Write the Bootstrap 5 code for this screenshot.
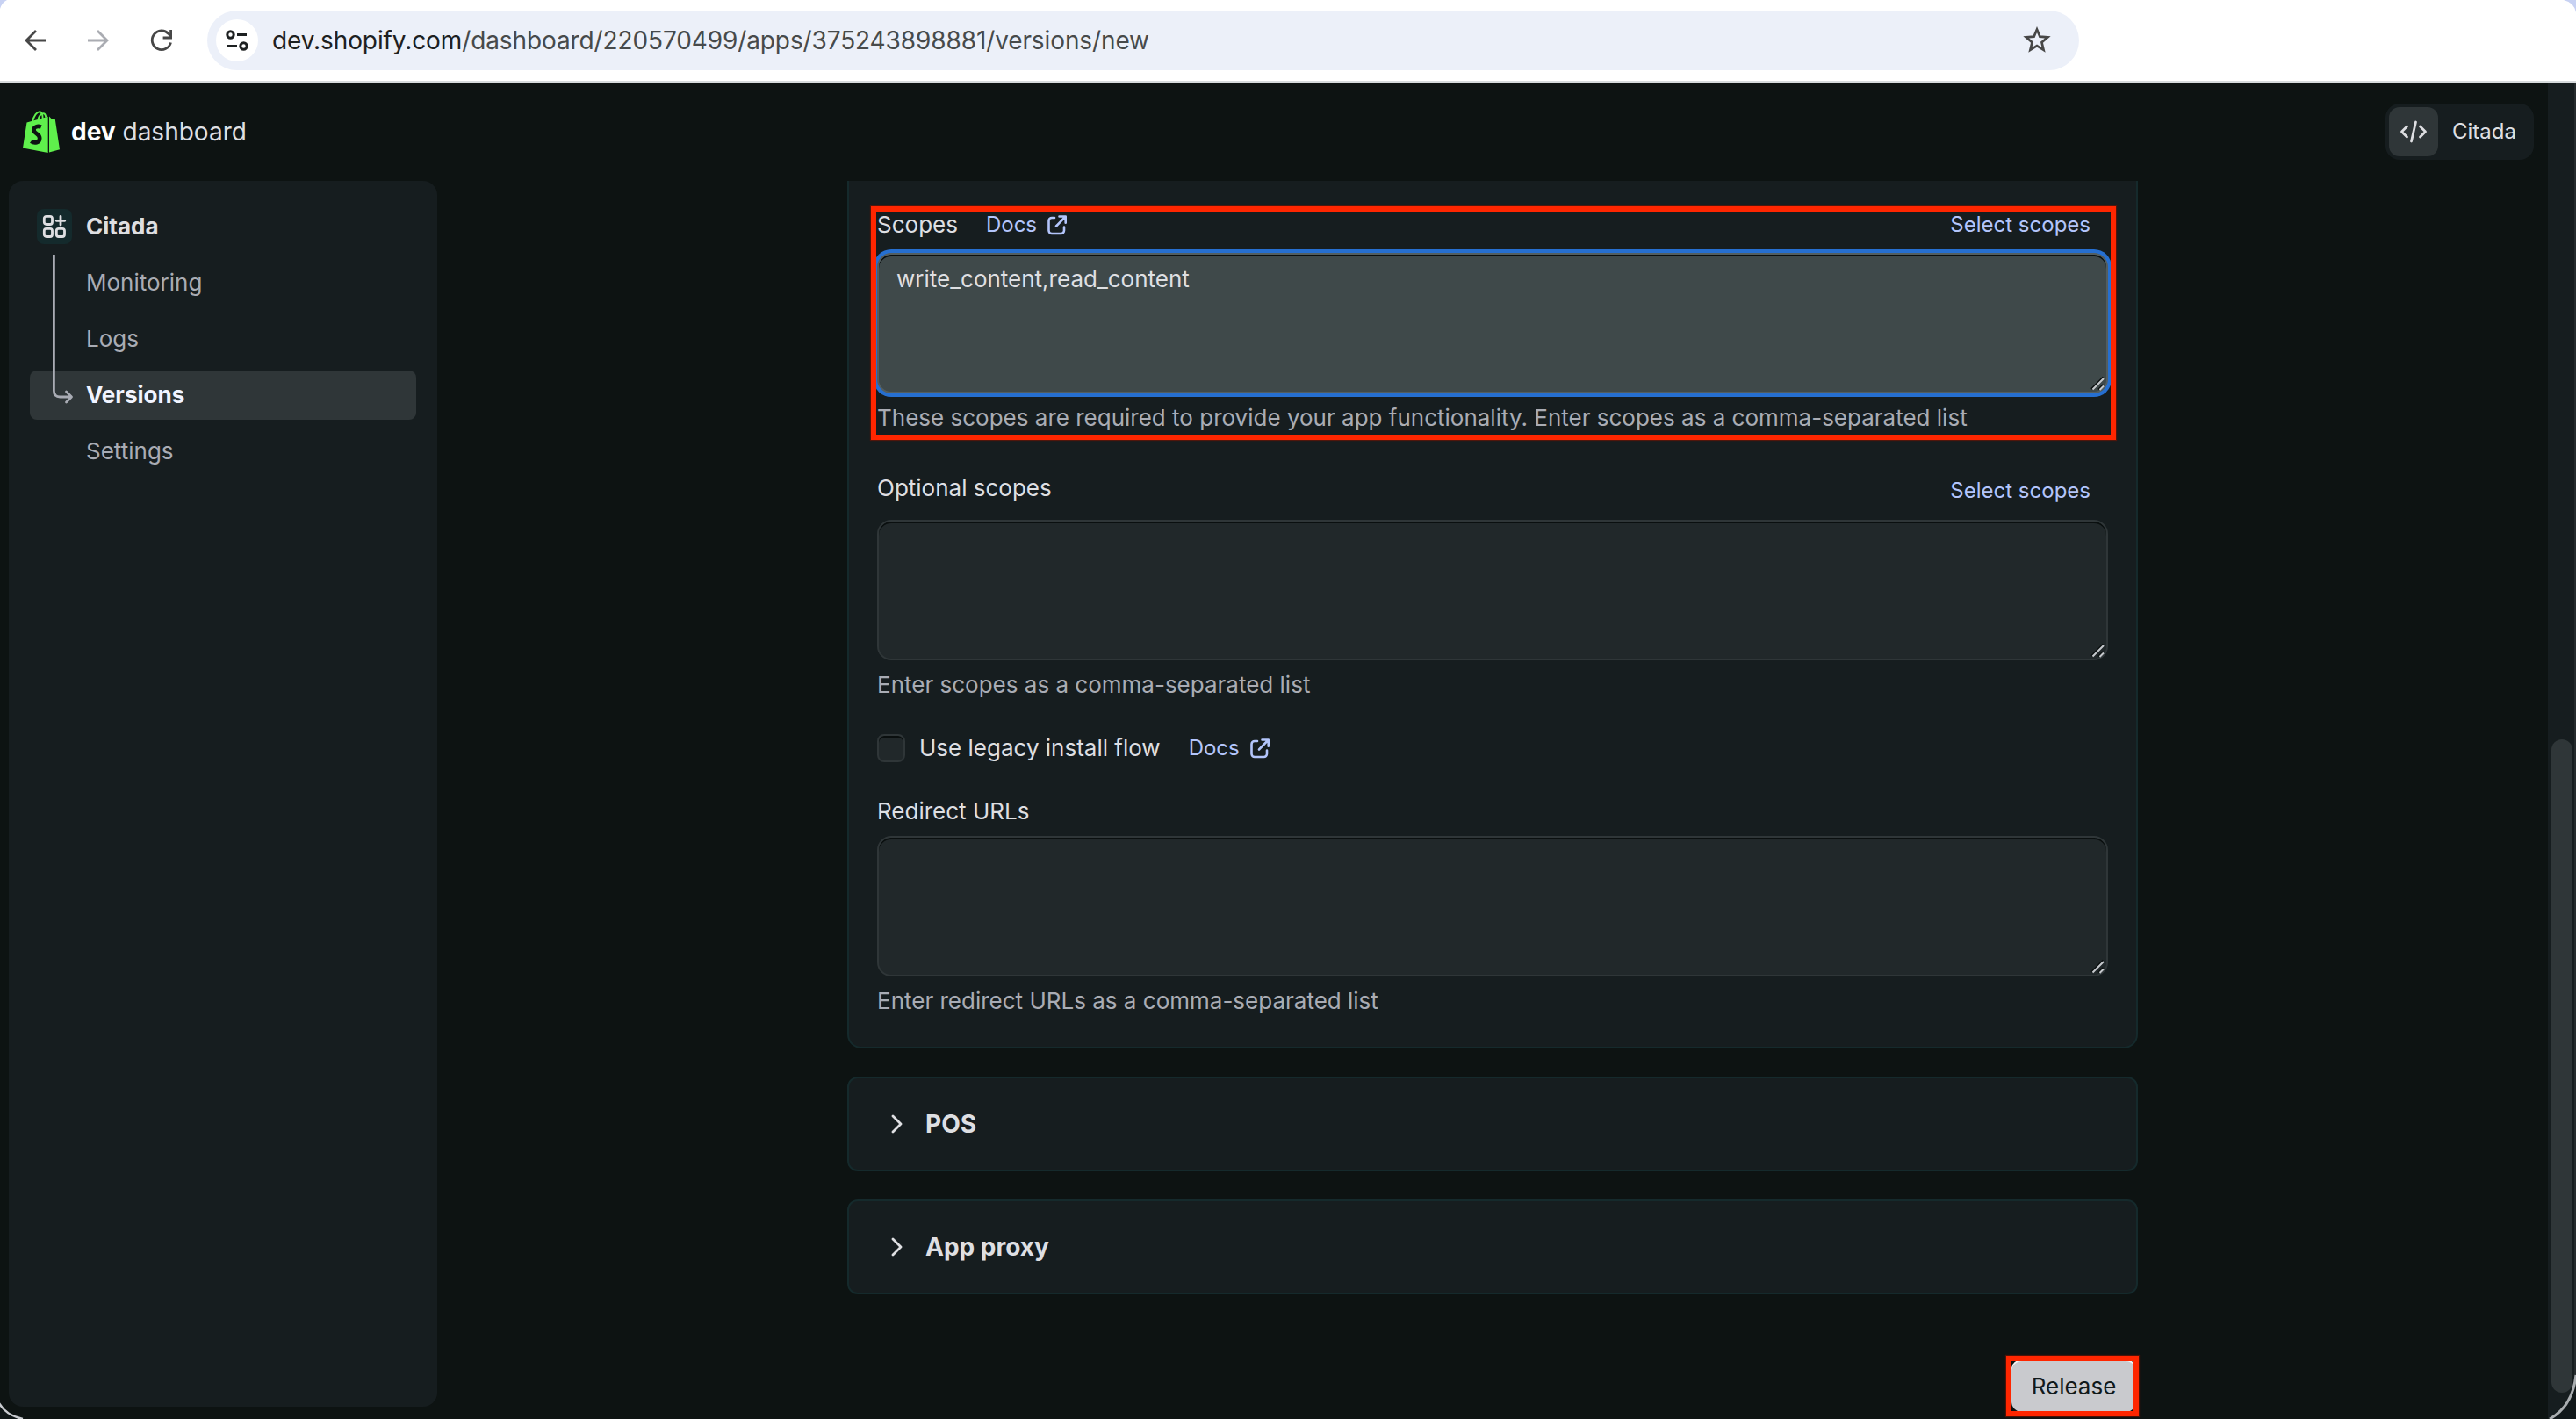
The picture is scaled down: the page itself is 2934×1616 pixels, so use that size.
<!DOCTYPE html>
<html lang="en" data-bs-theme="dark">
<head>
<meta charset="utf-8">
<title>dev dashboard</title>
<link rel="stylesheet" href="https://cdn.jsdelivr.net/npm/bootstrap@5.3.0/dist/css/bootstrap.min.css">
<style>
  html, body { height: 100%; }
  body { font-family: Inter, "Liberation Sans", sans-serif; font-size: 26px; line-height: 40px; color: #dedfe2; background: #0d1312; overflow: hidden; }
  svg { display: block; flex: none; }
  a { text-decoration: none; }

  /* Browser toolbar */
  .toolbar { height: 94px; background: #fff; border-bottom: 2px solid #d6dadc; padding: 0 0 0 26px; }
  .nav-icons { gap: 44px; width: 210px; }
  .omnibox { width: 2132px; height: 68px; border-radius: 34px; background: #ecf0f9; padding: 0 32px 0 10px; }
  .site-info { width: 48px; height: 48px; margin-right: 16px; }
  .url { font-size: 28px; letter-spacing: -.11px; color: #474a4b; }
  .url b { font-weight: 400; color: #1d2021; }

  /* Page frame */
  .page { height: 1522px; }
  .topbar { height: 112px; padding: 0 16px 0 26px; }
  .brand { font-size: 28px; margin-left: 13px; }
  .brand b { color: #fff; }
  .org { width: 169px; height: 64px; border-radius: 16px; background: #161d1f; padding: 4px; font-size: 24px; }
  .org-tile { width: 56px; height: 56px; border-radius: 12px; background: #2f3638; margin-right: 16px; }
  .side { width: 488px; height: 1396px; margin-left: 10px; border-radius: 16px; background: #161d1f; padding: 24px; }
  .side .nav-link { height: 56px; margin-bottom: 8px; padding: 0 0 0 64px; border-radius: 8px; color: #a9acb4; }
  .side .nav-link.app-link { padding-left: 8px; color: #dedfe2; font-weight: 700; }
  .side .nav-link.active { background: #2f3638; color: #f1f4ff; font-weight: 700; }
  .app-tile { width: 40px; height: 40px; border-radius: 8px; background: #142a2c; margin-right: 16px; }
  .tree { position: absolute; left: 24px; top: 84px; }

  /* Form column */
  .column-main { width: 1470px; margin-left: 467px; }
  .panel { background: #161d1f; border: 2px solid #152a2c; border-radius: 16px; }
  .panel-form { height: 988px; border-top: 0; border-radius: 0 0 16px 16px; padding: 24px 32px 32px; }
  .label-row { height: 56px; margin: 32px 0 8px; }
  .label-row .select-link { padding-top: 6px; }
  .label-row.label-first { height: 50px; margin-top: 0; padding-top: 2px; }
  .label-first .select-link { padding-top: 0; }
  .link { color: #b3c5fb; font-size: 24px; }
  .docs-link { margin-left: 32px; }
  .docs-link svg { margin-left: 7px; }
  .select-link { margin-right: 20px; }
  .field { resize: none; height: 160px; border: 2px solid #2f3638; border-radius: 16px; background: #21282a; box-shadow: inset 0 2px 0 #0a0f0f; padding: 8px 20px; font-size: 26px; line-height: 40px; color: #dedfe2; }
  .field.lit { background: #3f494a; border-color: #535e60; box-shadow: 0 0 0 4px #266fd0, inset 0 2px 0 #0a0f0f; }
  .grip { position: absolute; right: 2px; bottom: 2px; }
  .hint { color: #a9acb4; margin-top: 8px; }
  .stack-gap { margin-top: 32px; }
  .tick.form-check-input { width: 32px; height: 32px; margin: 0 16px 0 0; border: 2px solid #2f3638; border-radius: 8px; background: #21282a; box-shadow: inset 0 2px 0 #0a0f0f; }
  .panel-closed { height: 108px; margin-top: 32px; border-radius: 12px; padding-left: 48px; font-size: 28px; font-weight: 700; }
  .panel-name { margin-left: 25px; }
  .release { width: 142px; height: 60px; margin: 74px 2px 0 auto; border-radius: 12px; background: #c9cace; color: #11191a; font-size: 26px; box-shadow: inset 0 2px 0 #f4f4f5; border: 0; padding: 0; }

  /* Annotation frames and window edge */
  .frame { position: absolute; border: 6px solid #ff2600; box-shadow: 0 0 1px 1px rgba(120, 18, 0, .6); z-index: 3; }
  .frame-scopes { left: 27px; top: 29px; width: 1418px; height: 266px; }
  .frame-release { right: -1px; top: 1338px; width: 151px; height: 69px; }
  .rail { width: 32px; background: #161d1f; border-right: 2px solid #252b2d; padding: 748px 0 0 4px; }
  .thumb { width: 24px; height: 744px; border-radius: 12px; background: #2f3638; }
  .edge { position: absolute; left: 0; top: 0; z-index: 5; pointer-events: none; }
</style>
<script src="https://cdn.jsdelivr.net/npm/bootstrap@5.3.0/dist/js/bootstrap.bundle.min.js" defer></script>
</head>
<body>
<header class="toolbar d-flex align-items-center">
  <div class="nav-icons d-flex align-items-center">
    <svg width="28" height="36" viewBox="0 0 28 36" fill="none" stroke="#474747" stroke-width="2.8"><path d="M26 18H4M15 7 4 18l11 11"/></svg>
    <svg width="28" height="36" viewBox="0 0 28 36" fill="none" stroke="#aaacb2" stroke-width="2.8"><path d="M2 18h22M13 7l11 11-11 11"/></svg>
    <svg width="28" height="36" viewBox="0 0 28 36" fill="none" stroke="#474747" stroke-width="2.8"><path d="M24.5 20.5A10.8 10.8 0 1 1 22 10.5l2 2.500"/><path d="M24.600 6v9h-9"/></svg>
  </div>
  <div class="omnibox d-flex align-items-center">
    <span class="site-info rounded-circle bg-white d-flex align-items-center justify-content-center">
      <svg width="28" height="28" viewBox="0 0 28 28" fill="none" stroke="#1d2021" stroke-width="3"><circle cx="6.500" cy="7.500" r="3.700"/><path d="M14 7.500h11M3 20.500h11"/><circle cx="21.500" cy="20.500" r="3.700"/></svg>
    </span>
    <span class="url flex-grow-1"><b>dev.shopify.com</b>/dashboard/220570499/apps/375243898881/versions/new</span>
    <svg width="32" height="32" viewBox="0 0 32 32" fill="none" stroke="#474747" stroke-width="2.700"><path d="m16 3.500 3.400 8.200 8.900.7-6.800 5.800 2.100 8.700-7.600-4.700-7.600 4.700 2.100-8.700-6.800-5.800 8.900-.7z"/></svg>
  </div>
</header>

<div class="page d-flex">
  <div class="flex-grow-1 d-flex flex-column">
    <div class="topbar d-flex align-items-center">
      <svg width="42" height="48" viewBox="0 0 42 48">
        <path d="M4.500 13.500 28.700 6.700V48L0 42.600z" fill="#5ff04c"/>
        <path d="M30 6.600 32.800 9.400l4 .6L42 44.300 30 47.500z" fill="#5ff04c"/>
        <path d="M11 12.500C12.500 6 16 1.200 19 1.200c2.500 0 3.700 2.800 3.700 8M17.300 10.500C18.500 6 21 3.200 23.300 3.200c1.600 0 2.700 1.700 3 4.500" fill="none" stroke="#5ff04c" stroke-width="1.900"/>
        <path d="M20.800 18.600c-3.800-1.500-8.300-.2-8.300 3.400 0 4.200 6.700 4.100 6.700 9.200 0 5.600-6 6.500-9.800 3.700" fill="none" stroke="#0d1312" stroke-width="4.700"/>
      </svg>
      <span class="brand flex-grow-1"><b>dev</b> dashboard</span>
      <div class="org d-flex align-items-center">
        <span class="org-tile d-flex align-items-center justify-content-center">
          <svg width="32" height="28" viewBox="0 0 32 28" fill="none" stroke="#dedfe2" stroke-width="2.800" stroke-linecap="round" stroke-linejoin="round"><path d="M8.500 8 2.500 14l6 6M23.500 8l6 6-6 6M18.500 3l-5 22"/></svg>
        </span>
        <span>Citada</span>
      </div>
    </div>

    <div class="d-flex">
      <nav class="side nav flex-column flex-nowrap position-relative">
        <a class="nav-link app-link d-flex align-items-center" href="#">
          <span class="app-tile d-flex align-items-center justify-content-center">
            <svg width="28" height="28" viewBox="0 0 28 28" fill="none" stroke="#dedfe2" stroke-width="2.800" stroke-linecap="round"><rect x="2.300" y="2.300" width="9.200" height="9.200" rx="2.500"/><rect x="2.300" y="16.300" width="9.200" height="9.200" rx="2.500"/><rect x="16.300" y="16.300" width="9.200" height="9.200" rx="2.500"/><path d="M21 2.500v9.500M16.200 7.300h9.600"/></svg>
          </span>Citada</a>
        <a class="nav-link d-flex align-items-center" href="#">Monitoring</a>
        <a class="nav-link d-flex align-items-center" href="#">Logs</a>
        <a class="nav-link active d-flex align-items-center" href="#">Versions</a>
        <a class="nav-link d-flex align-items-center" href="#">Settings</a>
        <svg class="tree" width="52" height="172" viewBox="0 0 52 172" fill="none" stroke="#a9acb4" stroke-width="2.800"><path d="M27.400 0v155q0 7 7 7H46"/><path d="m41.500 156 6 6-6 6" stroke-linecap="round" stroke-linejoin="round"/></svg>
      </nav>

      <main class="column-main position-relative d-flex flex-column">
        <section class="panel panel-form">
          <div class="label-row label-first d-flex align-items-center">
            <span>Scopes</span>
            <a class="link docs-link d-flex align-items-center" href="#">Docs
              <svg width="32" height="32" viewBox="0 0 32 32" fill="none" stroke="#b3c5fb" stroke-width="2.600" stroke-linecap="round" stroke-linejoin="round"><path d="M13 8H10a3.500 3.500 0 0 0-3.500 3.500V22.500A3.500 3.500 0 0 0 10 26H20.500a3.500 3.500 0 0 0 3.500-3.500V18.500M18.500 6.500h7.200v7.200M25.200 7 15 17.500"/></svg></a>
            <a class="link select-link ms-auto" href="#">Select scopes</a>
          </div>
          <div class="position-relative">
            <textarea class="form-control field lit" spellcheck="false">write_content,read_content</textarea>
            <svg class="grip" width="18" height="18" viewBox="0 0 18 18" stroke-width="2"><path d="M1 15 14.500 1.500M9 15.500l5.500-5.500" stroke="#0c1111"/><path d="M2.500 15.500 15 3M10.500 16l4.500-4.500" stroke="#c5c8cc"/></svg>
          </div>
          <div class="hint">These scopes are required to provide your app functionality. Enter scopes as a comma-separated list</div>

          <div class="label-row d-flex align-items-center">
            <span>Optional scopes</span>
            <a class="link select-link ms-auto" href="#">Select scopes</a>
          </div>
          <div class="position-relative">
            <textarea class="form-control field"></textarea>
            <svg class="grip" width="18" height="18" viewBox="0 0 18 18" stroke-width="2"><path d="M1 15 14.500 1.500M9 15.500l5.500-5.500" stroke="#0c1111"/><path d="M2.500 15.500 15 3M10.500 16l4.500-4.500" stroke="#c5c8cc"/></svg>
          </div>
          <div class="hint">Enter scopes as a comma-separated list</div>

          <div class="d-flex align-items-center stack-gap">
            <input class="form-check-input tick" type="checkbox" id="legacy">
            <label for="legacy">Use legacy install flow</label>
            <a class="link docs-link d-flex align-items-center" href="#">Docs
              <svg width="32" height="32" viewBox="0 0 32 32" fill="none" stroke="#b3c5fb" stroke-width="2.600" stroke-linecap="round" stroke-linejoin="round"><path d="M13 8H10a3.500 3.500 0 0 0-3.500 3.500V22.500A3.500 3.500 0 0 0 10 26H20.500a3.500 3.500 0 0 0 3.500-3.500V18.500M18.500 6.500h7.200v7.200M25.200 7 15 17.500"/></svg></a>
          </div>

          <div class="stack-gap mb-2">Redirect URLs</div>
          <div class="position-relative">
            <textarea class="form-control field"></textarea>
            <svg class="grip" width="18" height="18" viewBox="0 0 18 18" stroke-width="2"><path d="M1 15 14.500 1.500M9 15.500l5.500-5.500" stroke="#0c1111"/><path d="M2.500 15.500 15 3M10.500 16l4.500-4.500" stroke="#c5c8cc"/></svg>
          </div>
          <div class="hint">Enter redirect URLs as a comma-separated list</div>
        </section>

        <section class="panel panel-closed d-flex align-items-center">
          <svg width="14" height="24" viewBox="0 0 14 24" fill="none" stroke="#dedfe2" stroke-width="2.800" stroke-linecap="round" stroke-linejoin="round"><path d="m2 3 9 9-9 9"/></svg>
          <span class="panel-name">POS</span>
        </section>
        <section class="panel panel-closed d-flex align-items-center">
          <svg width="14" height="24" viewBox="0 0 14 24" fill="none" stroke="#dedfe2" stroke-width="2.800" stroke-linecap="round" stroke-linejoin="round"><path d="m2 3 9 9-9 9"/></svg>
          <span class="panel-name">App proxy</span>
        </section>

        <button class="btn release" type="button">Release</button>
        <div class="frame frame-scopes"></div>
        <div class="frame frame-release"></div>
      </main>
    </div>
  </div>
  <div class="rail"><div class="thumb"></div></div>
</div>

<svg class="edge" width="2934" height="1616" viewBox="0 0 2934 1616" fill="none">
  <path d="M0 1599Q8 1612 26 1616H0z" fill="#101718"/>
  <path d="M-1 1598Q7 1612 26 1616" stroke="#c9cbd0" stroke-width="2.500"/>
  <path d="M2934 1566Q2930 1602 2904 1616H2934z" fill="#11181a"/>
  <path d="M2934 1566Q2930 1602 2904 1616" stroke="#a9adb0" stroke-width="3"/>
  <path d="M0 0H8Q2 3 0 10zM2934 0H2920Q2932 3 2934 14z" fill="#c8d2f3"/>
</svg>
</body>
</html>
